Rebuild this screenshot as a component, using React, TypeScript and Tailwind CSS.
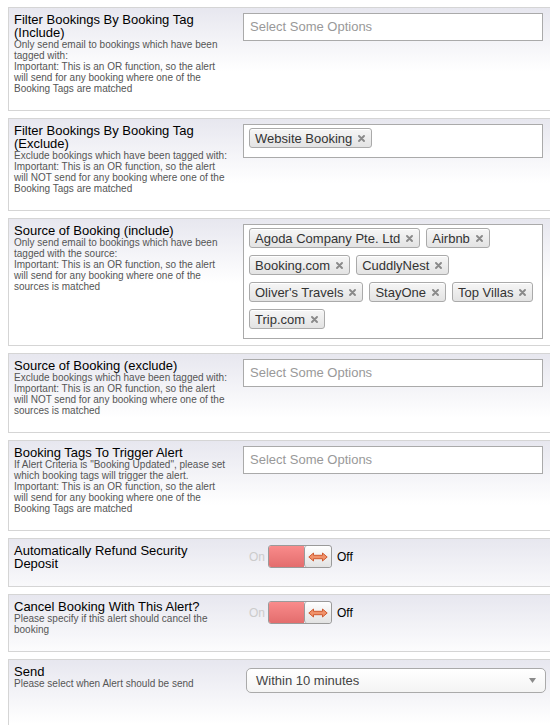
import type { ReactNode } from "react";

const font = { fontFamily: '"Liberation Sans", Arial, sans-serif' };

function RemoveIcon() {
  return (
    <svg width="7" height="7" viewBox="0 0 7 7" className="ml-[6px]">
      <path d="M1 1 L6 6 M6 1 L1 6" stroke="#8a8a8a" strokeWidth="1.9" strokeLinecap="round" />
    </svg>
  );
}

function Chip({ label }: { label: string }) {
  return (
    <span className="flex h-[20px] items-center rounded-[3px] border border-[#aaaaaa] bg-[linear-gradient(#f6f6f6,#e3e3e3)] pl-[5px] pr-[6px] text-[13px] leading-none text-[#333333] shadow-[inset_0_1px_0_#ffffff]">
      {label}
      <RemoveIcon />
    </span>
  );
}

function MultiSelect({ tags }: { tags?: string[] }) {
  if (!tags || tags.length === 0) {
    return (
      <div className="flex h-[28px] w-[300px] items-center border border-[#aaaaaa] bg-white px-[6px] text-[13px] text-[#999999]">
        Select Some Options
      </div>
    );
  }
  return (
    <div className="flex w-[300px] flex-wrap gap-x-[6px] gap-y-[7px] border border-[#aaaaaa] bg-white px-[5px] pb-[9px] pt-[3px]">
      {tags.map((t) => (
        <Chip key={t} label={t} />
      ))}
    </div>
  );
}

function Toggle() {
  return (
    <div className="ml-[6px] flex items-center pt-[1px]">
      <span className="w-[19px] text-[12px] text-[#cccccc]">On</span>
      <div className="flex h-[23px] w-[64px] overflow-hidden rounded-[3px] border border-[#9a9a9a]">
        <div className="w-[35px] bg-[linear-gradient(#f98b8b,#e36d6d)]" />
        <div className="flex flex-1 items-center justify-center rounded-[3px] border-l border-[#9a9a9a] bg-[linear-gradient(#ffffff,#e2e2e2)]">
          <svg width="20" height="10" viewBox="0 0 20 10">
            <path
              d="M0.8 5 L5.5 1 L5.5 3.3 L14.5 3.3 L14.5 1 L19.2 5 L14.5 9 L14.5 6.7 L5.5 6.7 L5.5 9 Z"
              fill="#f0926a"
              stroke="#cf5a30"
              strokeWidth="1"
              strokeLinejoin="round"
            />
          </svg>
        </div>
      </div>
      <span className="ml-[5px] text-[12px] text-black">Off</span>
    </div>
  );
}

function Dropdown({ value }: { value: string }) {
  return (
    <div className="ml-[3px] mt-[3px] flex h-[25px] w-[300px] items-center justify-between rounded-[5px] border border-[#aaaaaa] bg-[linear-gradient(#ffffff,#f4f4f4)] pl-[9px] pr-[9px] text-[13px] text-[#444444]">
      {value}
      <svg width="7" height="5" viewBox="0 0 7 5">
        <path d="M0 0 L7 0 L3.5 5 Z" fill="#8a8a8a" />
      </svg>
    </div>
  );
}

type Row = {
  title: string;
  desc?: string[];
  control: ReactNode;
};

const rows: Row[] = [
  {
    title: "Filter Bookings By Booking Tag (Include)",
    desc: [
      "Only send email to bookings which have been tagged with:",
      "Important: This is an OR function, so the alert will send for any booking where one of the Booking Tags are matched",
    ],
    control: <MultiSelect />,
  },
  {
    title: "Filter Bookings By Booking Tag (Exclude)",
    desc: [
      "Exclude bookings which have been tagged with:",
      "Important: This is an OR function, so the alert will NOT send for any booking where one of the Booking Tags are matched",
    ],
    control: <MultiSelect tags={["Website Booking"]} />,
  },
  {
    title: "Source of Booking (include)",
    desc: [
      "Only send email to bookings which have been tagged with the source:",
      "Important: This is an OR function, so the alert will send for any booking where one of the sources is matched",
    ],
    control: (
      <MultiSelect
        tags={[
          "Agoda Company Pte. Ltd",
          "Airbnb",
          "Booking.com",
          "CuddlyNest",
          "Oliver's Travels",
          "StayOne",
          "Top Villas",
          "Trip.com",
        ]}
      />
    ),
  },
  {
    title: "Source of Booking (exclude)",
    desc: [
      "Exclude bookings which have been tagged with:",
      "Important: This is an OR function, so the alert will NOT send for any booking where one of the sources is matched",
    ],
    control: <MultiSelect />,
  },
  {
    title: "Booking Tags To Trigger Alert",
    desc: [
      'If Alert Criteria is "Booking Updated", please set which booking tags will trigger the alert.',
      "Important: This is an OR function, so the alert will send for any booking where one of the Booking Tags are matched",
    ],
    control: <MultiSelect />,
  },
  {
    title: "Automatically Refund Security Deposit",
    control: <Toggle />,
  },
  {
    title: "Cancel Booking With This Alert?",
    desc: ["Please specify if this alert should cancel the booking"],
    control: <Toggle />,
  },
  {
    title: "Send",
    desc: ["Please select when Alert should be send"],
    control: <Dropdown value="Within 10 minutes" />,
  },
];

export default function App() {
  return (
    <div className="h-[725px] w-[550px] overflow-hidden bg-white pt-[7px]" style={font}>
      <div className="flex flex-col gap-[7px] pl-[8px]">
        {rows.map((r, i) => (
          <div
            key={r.title}
            className={`flex w-[560px] border border-[#d5d5d5] bg-[linear-gradient(#e7e7ef,#ffffff_64px)] ${
              i === rows.length - 1 ? "min-h-[90px]" : ""
            }`}
          >
            <div className="w-[229px] shrink-0 pb-[16px] pl-[5px] pr-[9px] pt-[5px]">
              <div className="text-[13px] leading-[13px] text-black">{r.title}</div>
              {r.desc && (
                <div className="text-[10px] leading-[11px] text-[#555555]">
                  {r.desc.map((d) => (
                    <div key={d}>{d}</div>
                  ))}
                </div>
              )}
            </div>
            <div className="ml-[5px] pb-[6px] pt-[5px]">{r.control}</div>
          </div>
        ))}
      </div>
    </div>
  );
}
